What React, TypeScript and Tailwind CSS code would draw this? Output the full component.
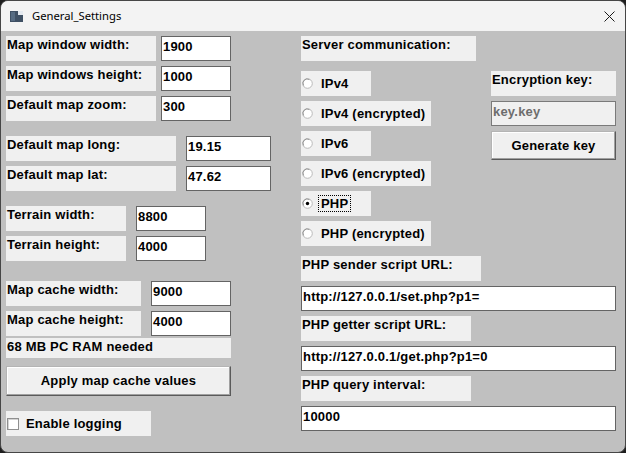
import type { ReactNode } from 'react';

const FONT = "font-['Liberation_Sans',Arial,sans-serif] font-bold text-[13px] tracking-[0.2px] text-black";

function Label({ w, h = 'h-[25px]', children }: { w: string; h?: string; children: ReactNode }) {
  return <div className={`${w} ${h} shrink-0 bg-[#f0f0f0] pl-px pt-px leading-4`}>{children}</div>;
}

function Field({ w, value, disabled }: { w: string; value: string; disabled?: boolean }) {
  return (
    <div
      className={`${w} h-[25px] shrink-0 border pl-px pt-[2px] leading-4 ${
        disabled ? 'border-[#7a7a7a] bg-[#f0f0f0] text-[#6d6d6d]' : 'border-[#646464] bg-white'
      }`}
    >
      {value}
    </div>
  );
}

function Row({ gap, children }: { gap: string; children: ReactNode }) {
  return <div className={`flex ${gap}`}>{children}</div>;
}

function Button({ w, h, children }: { w: string; h: string; children: ReactNode }) {
  return (
    <div
      className={`${w} ${h} flex shrink-0 items-center justify-center border border-t-[#b4b4b4] border-l-[#b4b4b4] border-r-[#5a5a5a] border-b-[#5a5a5a] bg-[#f0f0f0] shadow-[inset_-1px_-1px_0_#a0a0a0,inset_1px_1px_0_#ffffff]`}
    >
      {children}
    </div>
  );
}

function Radio({ w, label, checked }: { w: string; label: string; checked?: boolean }) {
  return (
    <div className={`${w} flex h-[25px] items-center bg-[#f0f0f0] pl-px`}>
      <svg width="11" height="11" viewBox="0 0 11 11" className="shrink-0">
        <circle cx="5.5" cy="5.5" r="4.8" fill="#ffffff" stroke="#b9b9b9" strokeWidth="1" />
        <path d="M1.6 7.5 A4.3 4.3 0 0 1 7.5 1.6" fill="none" stroke="#8c8c8c" strokeWidth="0.9" />
        {checked && <circle cx="5.5" cy="5.5" r="1.7" fill="#000000" />}
      </svg>
      {checked ? (
        <span className="ml-[5px] border border-dotted border-black px-[2px] leading-[15px]">{label}</span>
      ) : (
        <span className="ml-[8px] leading-4">{label}</span>
      )}
    </div>
  );
}

function TitleBar() {
  return (
    <div className="flex h-[30px] shrink-0 items-center bg-[#f3f3f3] pl-[9px] pr-[10px]">
      <svg width="13" height="11" viewBox="0 0 13 11" className="shrink-0">
        <rect x="0" y="0" width="13" height="11" fill="#3f5064" />
        <rect x="1" y="1" width="4" height="9" fill="#566b82" />
        <rect x="8" y="0" width="5" height="4" fill="#e4e9ef" />
      </svg>
      <span className="ml-[9px] font-['Noto_Sans',sans-serif] text-[11.25px] text-black">General_Settings</span>
      <svg width="11" height="11" viewBox="0 0 11 11" className="ml-auto shrink-0">
        <path d="M0.5 0.5 L10.5 10.5 M10.5 0.5 L0.5 10.5" stroke="#1a1a1a" strokeWidth="1" />
      </svg>
    </div>
  );
}

export default function App() {
  return (
    <div className="h-[453px] w-[626px] bg-[#1e1e1e]">
      <div className="flex h-full flex-col overflow-hidden rounded-[8px] border border-[#464646] bg-[#c0c0c0]">
        <TitleBar />
        <div className={`flex pl-[5px] pt-[5px] ${FONT}`}>
          {/* left column */}
          <div className="flex w-[295px] shrink-0 flex-col">
            <Row gap="gap-[5px]">
              <Label w="w-[150px]">Map window width:</Label>
              <Field w="w-[70px]" value="1900" />
            </Row>
            <div className="mt-[5px]">
              <Row gap="gap-[5px]">
                <Label w="w-[150px]">Map windows height:</Label>
                <Field w="w-[70px]" value="1000" />
              </Row>
            </div>
            <div className="mt-[5px]">
              <Row gap="gap-[5px]">
                <Label w="w-[150px]">Default map zoom:</Label>
                <Field w="w-[70px]" value="300" />
              </Row>
            </div>

            <div className="mt-[15px] flex flex-col gap-[5px]">
              <Row gap="gap-[10px]">
                <Label w="w-[170px]">Default map long:</Label>
                <Field w="w-[85px]" value="19.15" />
              </Row>
              <Row gap="gap-[10px]">
                <Label w="w-[170px]">Default map lat:</Label>
                <Field w="w-[85px]" value="47.62" />
              </Row>
            </div>

            <div className="mt-[15px] flex flex-col gap-[5px]">
              <Row gap="gap-[10px]">
                <Label w="w-[120px]">Terrain width:</Label>
                <Field w="w-[70px]" value="8800" />
              </Row>
              <Row gap="gap-[10px]">
                <Label w="w-[120px]">Terrain height:</Label>
                <Field w="w-[70px]" value="4000" />
              </Row>
            </div>

            <div className="mt-[20px] flex flex-col gap-[5px]">
              <Row gap="gap-[10px]">
                <Label w="w-[135px]">Map cache width:</Label>
                <Field w="w-[80px]" value="9000" />
              </Row>
              <Row gap="gap-[10px]">
                <Label w="w-[135px]">Map cache height:</Label>
                <Field w="w-[80px]" value="4000" />
              </Row>
            </div>

            <div className="mt-[2px]">
              <Label w="w-[225px]" h="h-[20px]">68 MB PC RAM needed</Label>
            </div>

            <div className="mt-[8px]">
              <Button w="w-[225px]" h="h-[30px]">Apply map cache values</Button>
            </div>

            <div className="mt-[15px] flex h-[25px] w-[145px] items-center bg-[#f0f0f0] pl-px">
              <span className="h-[12px] w-[12px] shrink-0 border border-[#8f8f8f] bg-white shadow-[inset_1px_1px_0_#d4d4d4]" />
              <span className="ml-[7px] leading-4">Enable logging</span>
            </div>
          </div>

          {/* right column */}
          <div className="flex flex-col">
            <Label w="w-[175px]">Server communication:</Label>

            <div className="mt-[10px] flex">
              <div className="flex w-[190px] flex-col gap-[5px]">
                <Radio w="w-[70px]" label="IPv4" />
                <Radio w="w-[130px]" label="IPv4 (encrypted)" />
                <Radio w="w-[70px]" label="IPv6" />
                <Radio w="w-[130px]" label="IPv6 (encrypted)" />
                <Radio w="w-[70px]" label="PHP" checked />
                <Radio w="w-[130px]" label="PHP (encrypted)" />
              </div>
              <div className="flex flex-col gap-[5px]">
                <Label w="w-[125px]">Encryption key:</Label>
                <Field w="w-[125px]" value="key.key" disabled />
                <Button w="w-[125px]" h="h-[29px]">Generate key</Button>
              </div>
            </div>

            <div className="mt-[10px] flex flex-col gap-[5px]">
              <Label w="w-[180px]">PHP sender script URL:</Label>
              <Field w="w-[315px]" value="http://127.0.0.1/set.php?p1=" />
              <Label w="w-[170px]">PHP getter script URL:</Label>
              <Field w="w-[315px]" value="http://127.0.0.1/get.php?p1=0" />
              <Label w="w-[170px]">PHP query interval:</Label>
              <Field w="w-[315px]" value="10000" />
            </div>
          </div>
        </div>
      </div>
    </div>
  );
}
